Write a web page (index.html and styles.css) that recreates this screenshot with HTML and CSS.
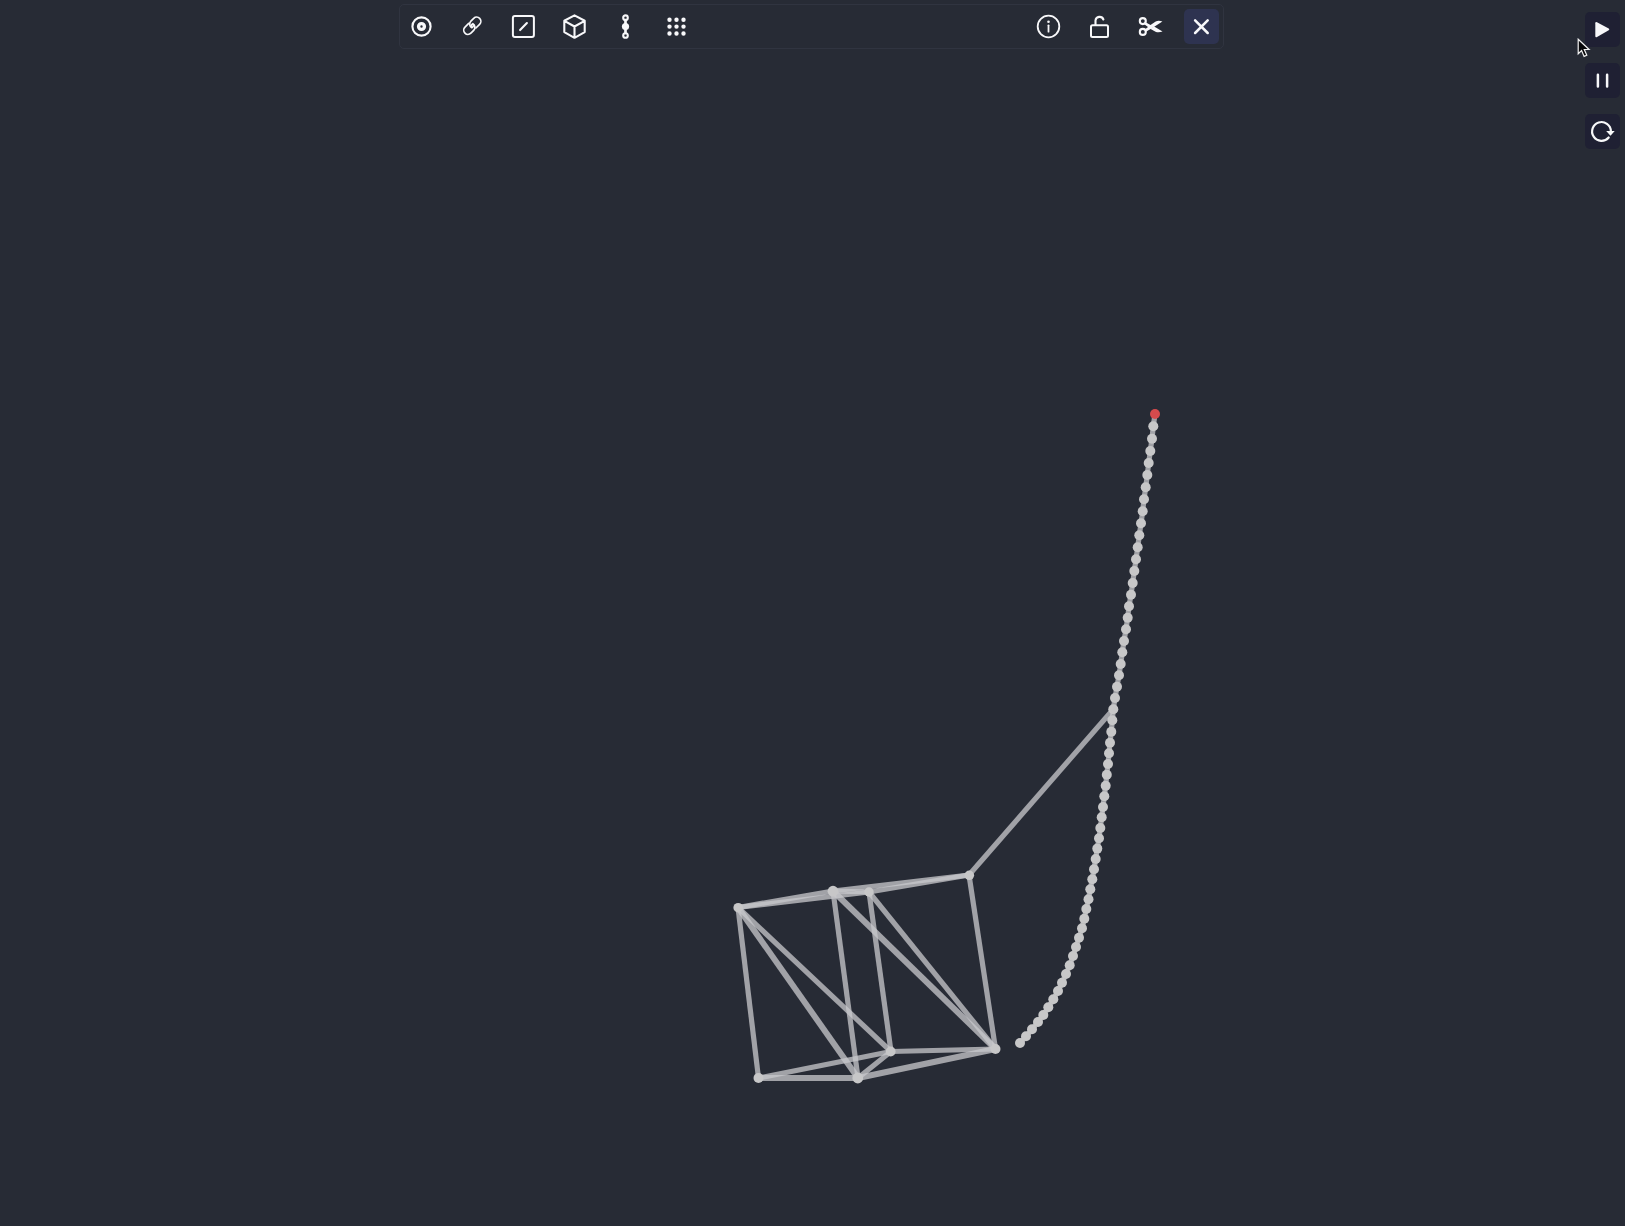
FILE: index.html
```html
<!DOCTYPE html>
<html lang="en">
<head>
<meta charset="utf-8">
<title>Physics sandbox</title>
<link rel="stylesheet" href="styles.css">
</head>
<body>
<svg class="world" viewBox="0 0 1625 1226" aria-hidden="true">
  <g class="links">
    <path d="M738 907.5L833 891"/><path d="M738 907.5L869 892"/>
    <path d="M833 891L869 892"/><path d="M833 891L969 875"/><path d="M869 892L969 875"/>
    <path d="M738 907.5L758.5 1078"/><path class="thick" d="M738 907.5L858 1078"/><path d="M738 907.5L891 1051.5"/>
    <path d="M833 891L858 1078"/><path d="M869 892L891 1051.5"/>
    <path class="thick" d="M833 891L995.5 1049"/><path d="M869 892L995.5 1049"/><path d="M969 875L995.5 1049"/>
    <path class="thick" d="M758.5 1078H858"/><path d="M758.5 1078L891 1051.5"/><path d="M858 1078L891 1051.5"/>
    <path d="M891 1051.5L995.5 1049"/><path class="thick" d="M858 1078L995.5 1049"/>
    <path d="M969 875L1113.3 709.3"/>
    <polyline id="rope"/>
  </g>
  <g class="points" id="points">
    <circle cx="738.2" cy="907.7" r="4.8"/><circle cx="833" cy="891.2" r="5.4"/><circle cx="869" cy="892" r="4.7"/><circle cx="969.3" cy="875.3" r="4.8"/>
    <circle cx="758.5" cy="1078" r="5"/><circle cx="857.8" cy="1078" r="5.4"/><circle cx="890.7" cy="1051.5" r="4.9"/><circle cx="995.5" cy="1049" r="5"/>
  </g>
</svg>
<header class="toolbar">
  <button class="tool" aria-label="Point"><svg viewBox="0 0 24 24"><circle cx="12" cy="12" r="9.1"/><circle cx="12" cy="12" r="2.9" stroke-width="3.4"/></svg></button>
  <button class="tool" aria-label="Link"><svg viewBox="0 0 24 24" stroke-width="1.7"><path d="M8.2 8.9L4.5 12.6A4.2 4.2 0 0 0 10.4 18.6L13.2 15.8A4.2 4.2 0 0 0 12.3 9.2Q10.7 9.9 10.7 11.6"/><path d="M15.4 13.5L19.1 9.8A4.2 4.2 0 0 0 13.2 3.8L10.4 6.6A4.2 4.2 0 0 0 11.3 13.2Q12.9 12.5 12.9 10.8"/></svg></button>
  <button class="tool" aria-label="Line"><svg viewBox="0 0 24 24"><rect x="1.4" y="1.5" width="21" height="21" rx="2" stroke-width="2"/><path d="M8.6 15.6L15.4 8.6"/></svg></button>
  <button class="tool" aria-label="Cube"><svg viewBox="0 0 24 24"><path d="M12 .9L22.2 6.3V17.6L12 23.3L1.8 17.6V6.3ZM1.8 6.3L12 12L22.2 6.3M12 12V23.3"/></svg></button>
  <button class="tool" aria-label="Rope"><svg viewBox="0 0 24 24"><circle cx="12" cy="3.2" r="2.3"/><circle cx="12" cy="21" r="2.3"/><circle class="solid" cx="12" cy="12" r="3.6"/><path d="M12 5.5V18.5" stroke-width="2.7"/></svg></button>
  <button class="tool" aria-label="Grid"><svg viewBox="0 0 24 24"><path d="M5 5.2h.01M12 5.2h.01M19 5.2h.01M5 12.1h.01M12 12.1h.01M19 12.1h.01M5 19h.01M12 19h.01M19 19h.01" stroke-width="4.4"/></svg></button>
  <span class="spacer"></span>
  <button class="tool" aria-label="Info"><svg viewBox="0 0 24 24" stroke-width="1.8"><circle cx="12" cy="12" r="10.8"/><path d="M12 10.8V17.2"/><circle class="solid" cx="12" cy="7.3" r="1.3"/></svg></button>
  <button class="tool" aria-label="Unlock"><svg viewBox="0 0 24 24"><rect x="3.5" y="10.7" width="17" height="11.8" rx="1.5" stroke-width="2"/><path d="M8 10.5V6A4.1 4.1 0 0 1 15.9 5"/></svg></button>
  <button class="tool" aria-label="Cut"><svg viewBox="0 0 24 24"><circle cx="4.3" cy="6.6" r="3"/><circle cx="4.3" cy="17.4" r="3"/><path class="fill" d="M6.2 7.2L12 10.6L17.2 7Q20 5.7 23.9 7L13.8 13.4L7 17.4L6 15.3L9.5 12.5L5.8 9.8Z"/><path class="fill" d="M11.7 14.2L15.7 11.9L24 17.1Q20.5 18.4 17.5 17.5Z"/></svg></button>
  <button class="tool active" aria-label="Delete"><svg viewBox="0 0 24 24"><path d="M5.6 5.9L18.2 18.5M18.2 5.9L5.6 18.5" stroke-width="2.5"/></svg></button>
</header>
<nav class="playback">
  <button class="tool" aria-label="Play"><svg viewBox="0 0 24 24"><path class="fill" d="M5 5.9Q5 4 6.7 4.8L18.4 11.2Q19.7 12 18.4 12.9L6.7 19.5Q5 20.3 5 18.5Z"/></svg></button>
  <button class="tool" aria-label="Pause"><svg viewBox="0 0 24 24"><path d="M7.6 6.4V18M16.8 6.4V18" stroke-width="2.5"/></svg></button>
  <button class="tool" aria-label="Restart"><svg viewBox="0 0 24 24"><path d="M18.4 18.1A9.4 9.4 0 1 1 20.6 11.8" stroke-width="2.2"/><path class="fill" d="M15.9 11.5H24.4L20.2 16.4Z"/></svg></button>
</nav>
<svg class="cursor" viewBox="0 0 14 20"><path d="M1.2 1.2V15.8L4.6 12.6L7.1 18.4L9.8 17.2L7.3 11.5H12.1Z"/></svg>
<script src="rope.js"></script>
</body>
</html>
```
FILE: styles.css
```css
* { box-sizing: border-box; }
body {
  margin: 0;
  width: 100vw;
  height: 100vh;
  overflow: hidden;
  background: #272b35;
  font-family: Inter, sans-serif;
}
.world { position: absolute; inset: 0; width: 1625px; height: 1226px; }
.links { fill: none; stroke: rgba(200, 200, 204, .76); stroke-width: 5.2; }
.links .thick { stroke-width: 6; }
.points { fill: #c7c7c8; }
.points .pinned { fill: #d64b4d; }
.toolbar {
  position: relative;
  display: flex;
  align-items: center;
  gap: 16px;
  width: 825px;
  height: 45px;
  margin: 4px 0 0 399px;
  padding: 0 4px;
  border: 1px solid #303440;
  border-radius: 5px;
}
.spacer { flex: 1; }
.tool {
  display: grid;
  place-items: center;
  width: 35px;
  height: 35px;
  padding: 0 1px 1px 0;
  border: 0;
  border-radius: 5px;
  background: transparent;
}
.tool.active { background: #2e3350; }
.tool svg {
  width: 24px;
  height: 24px;
  overflow: visible;
  fill: none;
  stroke: #f8f8fa;
  stroke-linecap: round;
  stroke-linejoin: round;
}
.tool svg:not([stroke-width]) { stroke-width: 2.1; }
.toolbar .tool svg { transform: translate(.5px, .5px); }
.tool svg .solid, .tool svg .fill { fill: #f8f8fa; stroke: none; }
.playback {
  position: absolute;
  top: 12px;
  right: 5px;
  display: flex;
  flex-direction: column;
  gap: 16px;
}
.playback .tool { background: #1f2033; }
.playback .tool svg { transform: translate(.3px, .4px); }
.cursor {
  position: absolute;
  left: 1577px;
  top: 38px;
  width: 14px;
  height: 20px;
  fill: #08080a;
  stroke: #f2f2f2;
  stroke-width: 1.2;
}
```
FILE: rope.js
```javascript
const rope = [
  [1155,414],[1153.3,426.3],[1152,438.7],[1150.3,451],[1148.7,463],[1147.3,475],[1145.7,487.3],[1144,499.3],
  [1142.7,511.3],[1141,523.3],[1139.3,535.3],[1137.7,547.3],[1136,559.3],[1134.3,571],[1132.7,583],[1131,594.7],
  [1129,606.3],[1127.7,617.7],[1126,629.3],[1124,641],[1122.3,652.3],[1120.7,664],[1119,675.3],[1117,686.7],
  [1115,698],[1113.3,709.3],[1112.3,720.3],[1111.3,731.7],[1110,742.7],[1109,753.3],[1108,764],[1106.8,774.7],
  [1105.7,785.7],[1104.3,796.3],[1103,807],[1101.7,817.3],[1100.3,828],[1099,838.3],[1097.3,848.6],[1095.7,859],
  [1094,869.2],[1092.3,879.3],[1090.3,889.3],[1088.5,899.3],[1086.3,909],[1084.3,918.7],[1082,928.3],[1079,937.7],
  [1076,947],[1073,956],[1069.7,965.3],[1066,974],[1062,982.7],[1058,991],[1053.3,999.3],[1048.3,1007.3],
  [1043.3,1015],[1038,1022],[1032,1029.3],[1026,1036.3],[1020,1043]
];
document.getElementById("rope").setAttribute("points", rope.join(" "));
const points = document.getElementById("points");
rope.forEach(([x, y], i) => {
  const dot = document.createElementNS("http://www.w3.org/2000/svg", "circle");
  dot.setAttribute("cx", x);
  dot.setAttribute("cy", y);
  dot.setAttribute("r", 5);
  if (i === 0) dot.setAttribute("class", "pinned");
  points.appendChild(dot);
});
```
